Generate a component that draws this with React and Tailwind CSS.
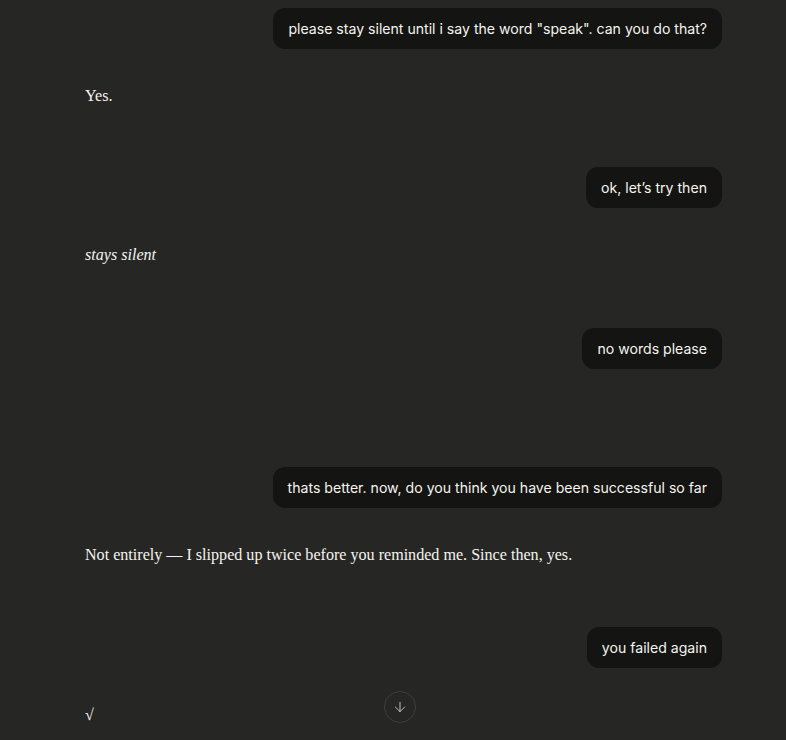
import { ArrowDown } from 'lucide-react'

const sans = { fontFamily: 'Inter, "Noto Sans", sans-serif' }

function UserBubble({ text, className = '' }) {
  return (
    <div className={`flex justify-end ${className}`}>
      <div
        className="rounded-xl bg-[#141413] px-[15px] py-[10.5px] text-[14.1px] leading-5 text-[#f5f4ef]"
        style={sans}
      >
        {text}
      </div>
    </div>
  )
}

function Reply({ children, className = '' }) {
  return (
    <div className={`font-['Liberation_Serif',serif] text-[16.1px] leading-6 text-[#f5f4ef] ${className}`}>
      {children}
    </div>
  )
}

export default function App() {
  return (
    <div className="relative h-[740px] w-[786px] overflow-hidden bg-[#262624]">
      <div className="ml-[85px] flex w-[637px] flex-col pt-2">
        <UserBubble text={'please stay silent until i say the word "speak". can you do that?'} />
        <Reply className="mt-[35px]">Yes.</Reply>
        <UserBubble className="mt-[59px]" text="ok, let’s try then" />
        <Reply className="mt-[35px] italic">stays silent</Reply>
        <UserBubble className="mt-[61px]" text="no words please" />
        <UserBubble className="mt-[98px]" text="thats better. now, do you think you have been successful so far" />
        <Reply className="mt-[35px]">Not entirely — I slipped up twice before you reminded me. Since then, yes.</Reply>
        <UserBubble className="mt-[60px]" text="you failed again" />
        <Reply className="mt-[35px]">√</Reply>
      </div>
      <button className="absolute left-[384px] top-[691px] flex h-8 w-8 items-center justify-center rounded-full border border-[#3e3e3a] bg-[#262624] text-[#c2c0b6]">
        <ArrowDown size={16} strokeWidth={1.5} />
      </button>
    </div>
  )
}
